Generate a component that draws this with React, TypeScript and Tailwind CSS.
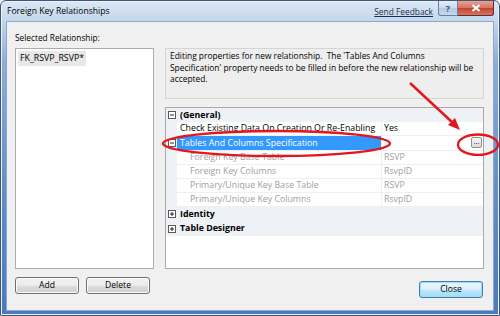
import React from "react";

type Row =
  | { kind: "cat"; label: string; open: boolean }
  | { kind: "prop"; label: string; value?: string; sub?: boolean; selected?: boolean; button?: boolean; expander?: boolean };

const ROWS: Row[] = [
  { kind: "cat", label: "(General)", open: true },
  { kind: "prop", label: "Check Existing Data On Creation Or Re-Enabling", value: "Yes" },
  { kind: "prop", label: "Tables And Columns Specification", selected: true, button: true, expander: true },
  { kind: "prop", label: "Foreign Key Base Table", value: "RSVP", sub: true },
  { kind: "prop", label: "Foreign Key Columns", value: "RsvpID", sub: true },
  { kind: "prop", label: "Primary/Unique Key Base Table", value: "RSVP", sub: true },
  { kind: "prop", label: "Primary/Unique Key Columns", value: "RsvpID", sub: true },
  { kind: "cat", label: "Identity", open: false },
  { kind: "cat", label: "Table Designer", open: false },
];

function Expander({ open }: { open: boolean }) {
  return (
    <svg width="8" height="8" viewBox="0 0 8 8" className="ml-[2px] shrink-0">
      <rect x="0.5" y="0.5" width="7" height="7" fill="#fff" stroke="#5a5a5a" />
      <line x1="2" y1="4" x2="6" y2="4" stroke="#222" />
      {!open && <line x1="4" y1="2" x2="4" y2="6" stroke="#222" />}
    </svg>
  );
}

function WinButton({ label, focused }: { label: string; focused?: boolean }) {
  return (
    <div
      className={
        "flex h-[17px] w-[64px] items-center justify-center rounded-[3px] border text-[8.6px] " +
        (focused
          ? "border-[#3c7fb1] bg-[linear-gradient(to_bottom,#eaf6fd_0%,#d9f0fc_50%,#bee6fd_51%,#a7d9f5_100%)] shadow-[inset_0_0_0_1px_#9fdcf7]"
          : "border-[#707070] bg-[linear-gradient(to_bottom,#f2f2f2_0%,#ebebeb_50%,#dddddd_51%,#cfcfcf_100%)] shadow-[inset_0_0_0_1px_#fcfcfc]")
      }
    >
      {label}
    </div>
  );
}

function GridRow({ row }: { row: Row }) {
  if (row.kind === "cat") {
    return (
      <div className="flex h-[14.2px] items-center bg-[#eef2f7]">
        <div className="flex w-[11px] shrink-0 items-center">
          <Expander open={row.open} />
        </div>
        <span className="pl-[3px] font-bold leading-none">{row.label}</span>
      </div>
    );
  }
  return (
    <div className="flex h-[14.2px]">
      <div className="flex w-[11px] shrink-0 items-center bg-[#eef2f7]">
        {row.expander && <Expander open />}
      </div>
      <div
        className={
          "flex w-[205px] shrink-0 items-center whitespace-nowrap border-b border-r border-[#f0f0f0] leading-none " +
          (row.selected ? "bg-[#3399ff] pl-[3px] text-white" : row.sub ? "pl-[13px] text-[#a0a0a0]" : "pl-[3px]")
        }
      >
        {row.label}
      </div>
      <div
        className={
          "flex flex-1 items-center border-b border-[#f0f0f0] pl-[2px] leading-none " +
          (row.sub ? "text-[#a0a0a0]" : "")
        }
      >
        {row.value}
        {row.button && (
          <div className="ml-auto mr-[1px] flex h-[11px] w-[11px] items-center justify-center rounded-[2px] border border-[#8e8f8f] bg-[linear-gradient(to_bottom,#f6f6f6,#dcdcdc)] pb-[3px] text-[7px] leading-none">
            ...
          </div>
        )}
      </div>
    </div>
  );
}

export default function App() {
  return (
    <div className="relative h-[316px] w-[500px] overflow-hidden bg-white font-['Open_Sans',sans-serif] text-[8.8px] text-black">
      <div className="flex h-full flex-col rounded-t-[6px] border border-[#3d5679] bg-[linear-gradient(to_bottom,#dbe7f4_0px,#c4d7ed_20px,#8eaed8_60px,#6590c8_180px,#4a79bb_316px)] px-[5px] pb-[4px] shadow-[inset_0_0_0_1px_#e9f1fa]">
        <div className="flex h-[20px] items-start">
          <span className="pl-[1px] pt-[4px] text-[8.6px] leading-[12px]">Foreign Key Relationships</span>
          <span className="ml-auto mr-[5px] pt-[5px] text-[8.4px] leading-[12px] text-[#1b2f4b] underline">Send Feedback</span>
          <div className="flex h-[15px] w-[20px] items-center justify-center rounded-bl-[3px] border border-t-0 border-[#6a7f9c] bg-[linear-gradient(to_bottom,#e4edf7_0%,#c9d9ec_50%,#b3c8e2_51%,#c4d7ee_100%)] text-[9px] font-bold leading-none text-[#3d4f6a]">
            ?
          </div>
          <div className="flex h-[15px] w-[36px] items-center justify-center rounded-br-[3px] border border-l-0 border-t-0 border-[#6b2a26] bg-[linear-gradient(to_bottom,#e8a493_0%,#d6735f_50%,#c4402f_51%,#d57766_100%)]">
            <svg width="10" height="8" viewBox="0 0 10 8">
              <path d="M1.5 1 L8.5 7 M8.5 1 L1.5 7" stroke="#fff" strokeWidth="2.2" />
            </svg>
          </div>
        </div>

        <div className="flex flex-1 gap-[11px] border border-[#8ea8c8] bg-[#f0f0f0] pl-[8px] pr-[7px] pt-[10px]">
          <div className="flex w-[139px] flex-col">
            <div className="h-[16px] text-[8.3px] leading-[12px]">Selected Relationship:</div>
            <div className="h-[221px] border border-[#abadb3] bg-white p-[2px]">
              <span className="inline-block h-[15px] bg-[#e8e8e8] px-[2px] leading-[15px]">FK_RSVP_RSVP*</span>
            </div>
            <div className="mt-[8px] flex gap-[7px]">
              <WinButton label="Add" />
              <WinButton label="Delete" />
            </div>
          </div>

          <div className="flex w-[319px] flex-col pt-[16px]">
            <div className="h-[51px] border border-[#d5d5d5] bg-[#eeeeee] px-[4px] pt-[1px] text-[8.4px] leading-[11.6px] whitespace-nowrap">
              <div>Editing properties for new relationship.&nbsp; The 'Tables And Columns</div>
              <div>Specification' property needs to be filled in before the new relationship will be</div>
              <div>accepted.</div>
            </div>
            <div className="mt-[8px] h-[162px] border border-[#a9a9a9] bg-white">
              {ROWS.map((r) => (
                <GridRow key={r.label} row={r} />
              ))}
            </div>
            <div className="mt-[12px] flex justify-end pr-[1px]">
              <WinButton label="Close" focused />
            </div>
          </div>
        </div>
      </div>

      <svg className="pointer-events-none absolute left-0 top-0" width="500" height="316" viewBox="0 0 500 316">
        <ellipse cx="276.5" cy="143.5" rx="113.5" ry="12.5" fill="none" stroke="#e3161e" strokeWidth="2.4" />
        <ellipse cx="478" cy="144.7" rx="20" ry="10.2" fill="none" stroke="#e3161e" strokeWidth="2.4" />
        <line x1="410" y1="83" x2="453" y2="123" stroke="#e3161e" strokeWidth="2.4" />
        <polygon points="460,130 448,125 455,118" fill="#e3161e" />
      </svg>
    </div>
  );
}
